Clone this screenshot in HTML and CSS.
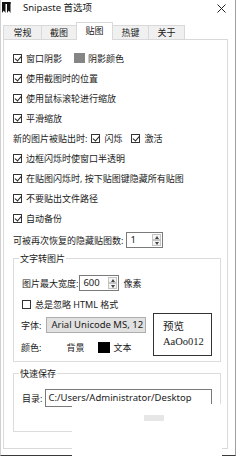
FILE: index.html
```html
<!DOCTYPE html>
<html lang="zh">

<head>
    <meta charset="UTF-8">
    <meta name="viewport" content="width=device-width, initial-scale=1.0">
    <title>Snipaste 首选项</title>
    <link rel="stylesheet" href="styles.css">
</head>

<body>
    <div class="window">
        <div class="titlebar">
            <svg class="logo" width="9" height="11" viewBox="0 0 9 11">
                <path d="M0 0 H3.5 V11 L1.75 8.5 L0 11 Z M5 0 H8.5 V11 L6.75 8.5 L5 11 Z" fill="#111" />
                <rect x="0" y="0" width="8.5" height="2" fill="#111" />
            </svg>
            <span class="title">Snipaste 首选项</span>
            <svg class="close" width="9" height="9" viewBox="0 0 9 9">
                <path d="M0.5 0.5 L8.5 8.5 M8.5 0.5 L0.5 8.5" stroke="#222" stroke-width="1" />
            </svg>
        </div>

        <div class="tabs">
            <div class="tab">常规</div>
            <div class="tab">截图</div>
            <div class="tab active">贴图</div>
            <div class="tab">热键</div>
            <div class="tab">关于</div>
        </div>

        <div class="panel">
            <div class="row">
                <span class="cb on"></span>窗口阴影
                <span class="swatch gray"></span>阴影颜色
            </div>
            <div class="row"><span class="cb on"></span>使用截图时的位置</div>
            <div class="row"><span class="cb on"></span>使用鼠标滚轮进行缩放</div>
            <div class="row"><span class="cb on"></span>平滑缩放</div>
            <div class="row">
                新的图片被贴出时:
                <span class="cb on flash"></span>闪烁
                <span class="cb on active-cb"></span>激活
            </div>
            <div class="row"><span class="cb on"></span>边框闪烁时使窗口半透明</div>
            <div class="row"><span class="cb on"></span>在贴图闪烁时,&nbsp;按下贴图键隐藏所有贴图</div>
            <div class="row"><span class="cb on"></span>不要贴出文件路径</div>
            <div class="row"><span class="cb on"></span>自动备份</div>
            <div class="row restore">
                可被再次恢复的隐藏贴图数:
                <div class="spin small">
                    <span class="val">1</span>
                    <span class="arrows"><i class="up"></i><i class="down"></i></span>
                </div>
            </div>

            <!-- 文字转图片 -->
            <div class="group text-group">
                <div class="group-title">文字转图片</div>
                <div class="row first">
                    图片最大宽度:
                    <div class="spin wide">
                        <span class="val">600</span>
                        <span class="arrows"><i class="up"></i><i class="down"></i></span>
                    </div>
                    <span class="unit">像素</span>
                </div>
                <div class="row ignore"><span class="cb"></span>总是忽略 HTML 格式</div>
                <div class="font-area">
                    <div class="font-rows">
                        <div class="row font-row">
                            字体:
                            <span class="font-btn">Arial Unicode MS, 12</span>
                        </div>
                        <div class="row font-row">
                            颜色:
                            <span class="bg-label">背景</span>
                            <span class="swatch black"></span>文本
                        </div>
                    </div>
                    <div class="preview">
                        <div>预览</div>
                        <div>AaOo012</div>
                    </div>
                </div>
            </div>

            <!-- 快速保存 -->
            <div class="group save-group">
                <div class="group-title">快速保存</div>
                <div class="row first">
                    目录:
                    <span class="field">C:/Users/Administrator/Desktop</span>
                </div>
            </div>
        </div>

        <div class="cover"><span class="ghost"></span></div>
    </div>
</body>

</html>
```

FILE: styles.css
```css
* {
    box-sizing: border-box;
}

body {
    margin: 0;
    padding: 0;
    width: 240px;
    height: 456px;
    overflow: hidden;
    background: #fff;
    color: #1a1a1a;
    font-family: "Noto Sans", "Noto Sans CJK SC", sans-serif;
    font-size: 9px;
}

.window {
    position: relative;
    width: 236px;
    height: 456px;
    background: #fff;
    border-left: 1px solid #cfcfcf;
    border-right: 1px solid #a0a0a0;
    border-bottom: 1px solid #3a3a3a;
}

/* 标题栏 */
.titlebar {
    height: 22px;
    display: flex;
    align-items: flex-start;
    padding-top: 2px;
}

.logo {
    margin-left: 1px;
}

.title {
    margin-left: 12px;
    line-height: 11px;
    font-size: 9.5px;
}

.close {
    margin-left: auto;
    margin-right: 9px;
    margin-top: 2px;
}

/* 选项卡 */
.tabs {
    height: 17px;
    display: flex;
    align-items: flex-end;
    padding-left: 2px;
}

.tab {
    width: 37px;
    height: 14px;
    margin-right: -1px;
    border: 1px solid #d9d9d9;
    border-bottom: none;
    background: #f0f0f0;
    text-align: center;
    line-height: 13px;
}

.tab:nth-child(1) {
    width: 39px;
}

.tab:nth-child(2) {
    width: 36px;
}

.tab.active {
    height: 18px;
    margin-bottom: -1px;
    background: #fff;
    line-height: 15px;
    position: relative;
    z-index: 1;
}

/* 内容面板 */
.panel {
    margin-left: 2px;
    width: 225px;
    height: 410px;
    border: 1px solid #d9d9d9;
    padding: 8px 6px 0 9px;
}

.row {
    display: flex;
    align-items: center;
    height: 20px;
    white-space: nowrap;
}

.cb {
    position: relative;
    flex-shrink: 0;
    width: 9px;
    height: 9px;
    border: 1px solid #333;
    background: #fff;
    margin-right: 4px;
}

.cb.on::after {
    content: "";
    position: absolute;
    left: 2px;
    top: 0;
    width: 3px;
    height: 5px;
    border-right: 1.2px solid #222;
    border-bottom: 1.2px solid #222;
    transform: rotate(40deg);
}

.cb.flash {
    margin-left: 4px;
}

.cb.active-cb {
    margin-left: 9px;
}

.swatch {
    flex-shrink: 0;
    display: inline-block;
    margin-right: 3px;
}

.swatch.gray {
    width: 11px;
    height: 10px;
    background: #858585;
    margin-left: 12px;
}

.swatch.black {
    width: 12px;
    height: 11px;
    background: #000;
    margin-left: 14px;
}

.restore {
    margin-top: 2px;
}

/* 数字框 */
.spin {
    display: flex;
    height: 16px;
    border: 1px solid #7a7a7a;
    background: #fff;
}

.spin.small {
    width: 37px;
    margin-left: 3px;
}

.spin.wide {
    width: 40px;
    margin-left: 1px;
}

.spin .val {
    flex: 1;
    padding-left: 3px;
    line-height: 14px;
    font-size: 9.5px;
}

.spin .arrows {
    width: 10px;
    display: flex;
    flex-direction: column;
    padding: 1px 1px 1px 0;
    gap: 0;
}

.spin .arrows i {
    flex: 1;
    position: relative;
    border: 1px solid #c4c4c4;
    background: #f4f4f4;
}

.spin .arrows i::after {
    content: "";
    position: absolute;
    left: 2px;
    border-left: 2px solid transparent;
    border-right: 2px solid transparent;
}

.spin .arrows .up::after {
    top: 1px;
    border-bottom: 3px solid #444;
}

.spin .arrows .down::after {
    top: 1px;
    border-top: 3px solid #444;
}

.unit {
    margin-left: 4px;
}

/* 分组框 */
.group {
    width: 208px;
    border: 1px solid #dcdcdc;
    padding: 0 0 0 8px;
}

.group-title {
    width: fit-content;
    margin-top: -7px;
    margin-left: -3px;
    padding: 0 1px;
    line-height: 14px;
    background: #fff;
}

.group .row.first {
    margin-top: 7px;
}

.text-group {
    margin-top: 8px;
    padding-bottom: 3px;
}

.ignore {
    margin-top: 1px;
}

.font-area {
    display: flex;
}

.font-rows {
    width: 131px;
}

.font-row {
    height: 22px;
    margin-left: -1px;
}

.font-btn {
    margin-left: 5px;
    width: 100px;
    height: 16px;
    padding-left: 4px;
    line-height: 14px;
    font-size: 9.5px;
    background: #e1e1e1;
    border: 1px solid #adadad;
}

.bg-label {
    margin-left: 25px;
}

.preview {
    margin-top: -1px;
    width: 59px;
    height: 43px;
    border: 1px solid #333;
    padding: 5px 0 0 9px;
    font-family: "Liberation Serif", "Noto Sans CJK SC", serif;
    font-size: 10.5px;
    line-height: 15px;
}

.save-group {
    margin-top: 11px;
    padding-bottom: 23px;
}

.field {
    margin-left: 3px;
    width: 167px;
    height: 18px;
    border: 1px solid #7a7a7a;
    padding-left: 2px;
    line-height: 16px;
    font-size: 9.5px;
}

/* 底部遮挡的白块 */
.cover {
    position: absolute;
    left: 71px;
    top: 404px;
    width: 150px;
    height: 52px;
    background: #fff;
}

.ghost {
    position: absolute;
    left: 72px;
    top: 11px;
    width: 20px;
    height: 6px;
    background: #e6e6e6;
    border-radius: 1px;
}
```
